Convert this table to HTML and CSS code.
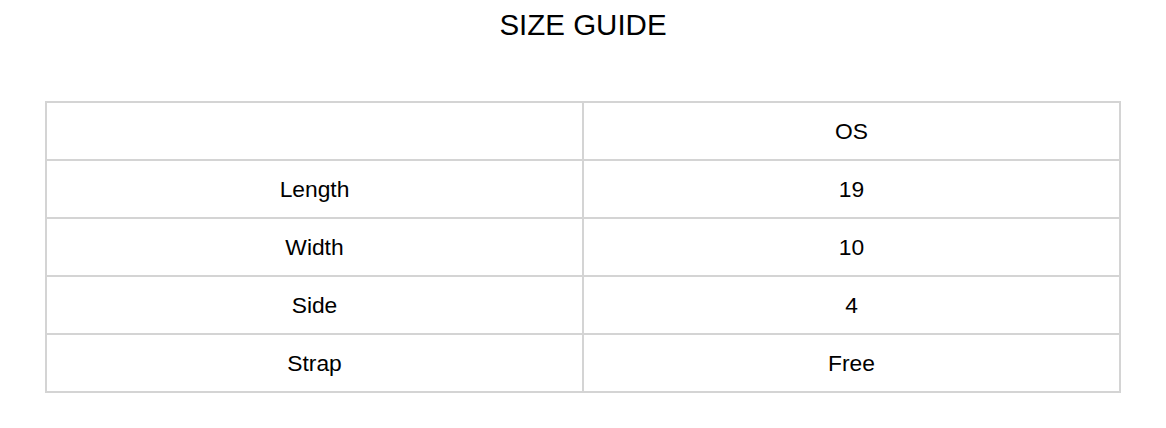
FILE: index.html
```html
<!DOCTYPE html>
<html>
<head>
<meta charset="utf-8">
<link rel="stylesheet" href="styles.css">
</head>
<body>
<h1 class="title">SIZE GUIDE</h1>
<table class="guide">
  <tr><td></td><td>OS</td></tr>
  <tr><td>Length</td><td>19</td></tr>
  <tr><td>Width</td><td>10</td></tr>
  <tr><td>Side</td><td>4</td></tr>
  <tr><td>Strap</td><td>Free</td></tr>
</table>
</body>
</html>
```
FILE: styles.css
```css
html, body {
  margin: 0;
  padding: 0;
  background: #fff;
}
body {
  font-family: "Liberation Sans", Arial, sans-serif;
  color: #000;
}
.title {
  margin: 8px 0 0 0;
  font-size: 29.5px;
  line-height: 34px;
  font-weight: normal;
  text-align: center;
}
.guide {
  margin: 59px 0 0 45px;
  width: 1076px;
  border-collapse: collapse;
  table-layout: fixed;
}
.guide td {
  border: 2px solid #d4d4d4;
  height: 56px;
  padding: 0;
  text-align: center;
  vertical-align: middle;
  font-size: 22.8px;
  width: 50%;
}
```
